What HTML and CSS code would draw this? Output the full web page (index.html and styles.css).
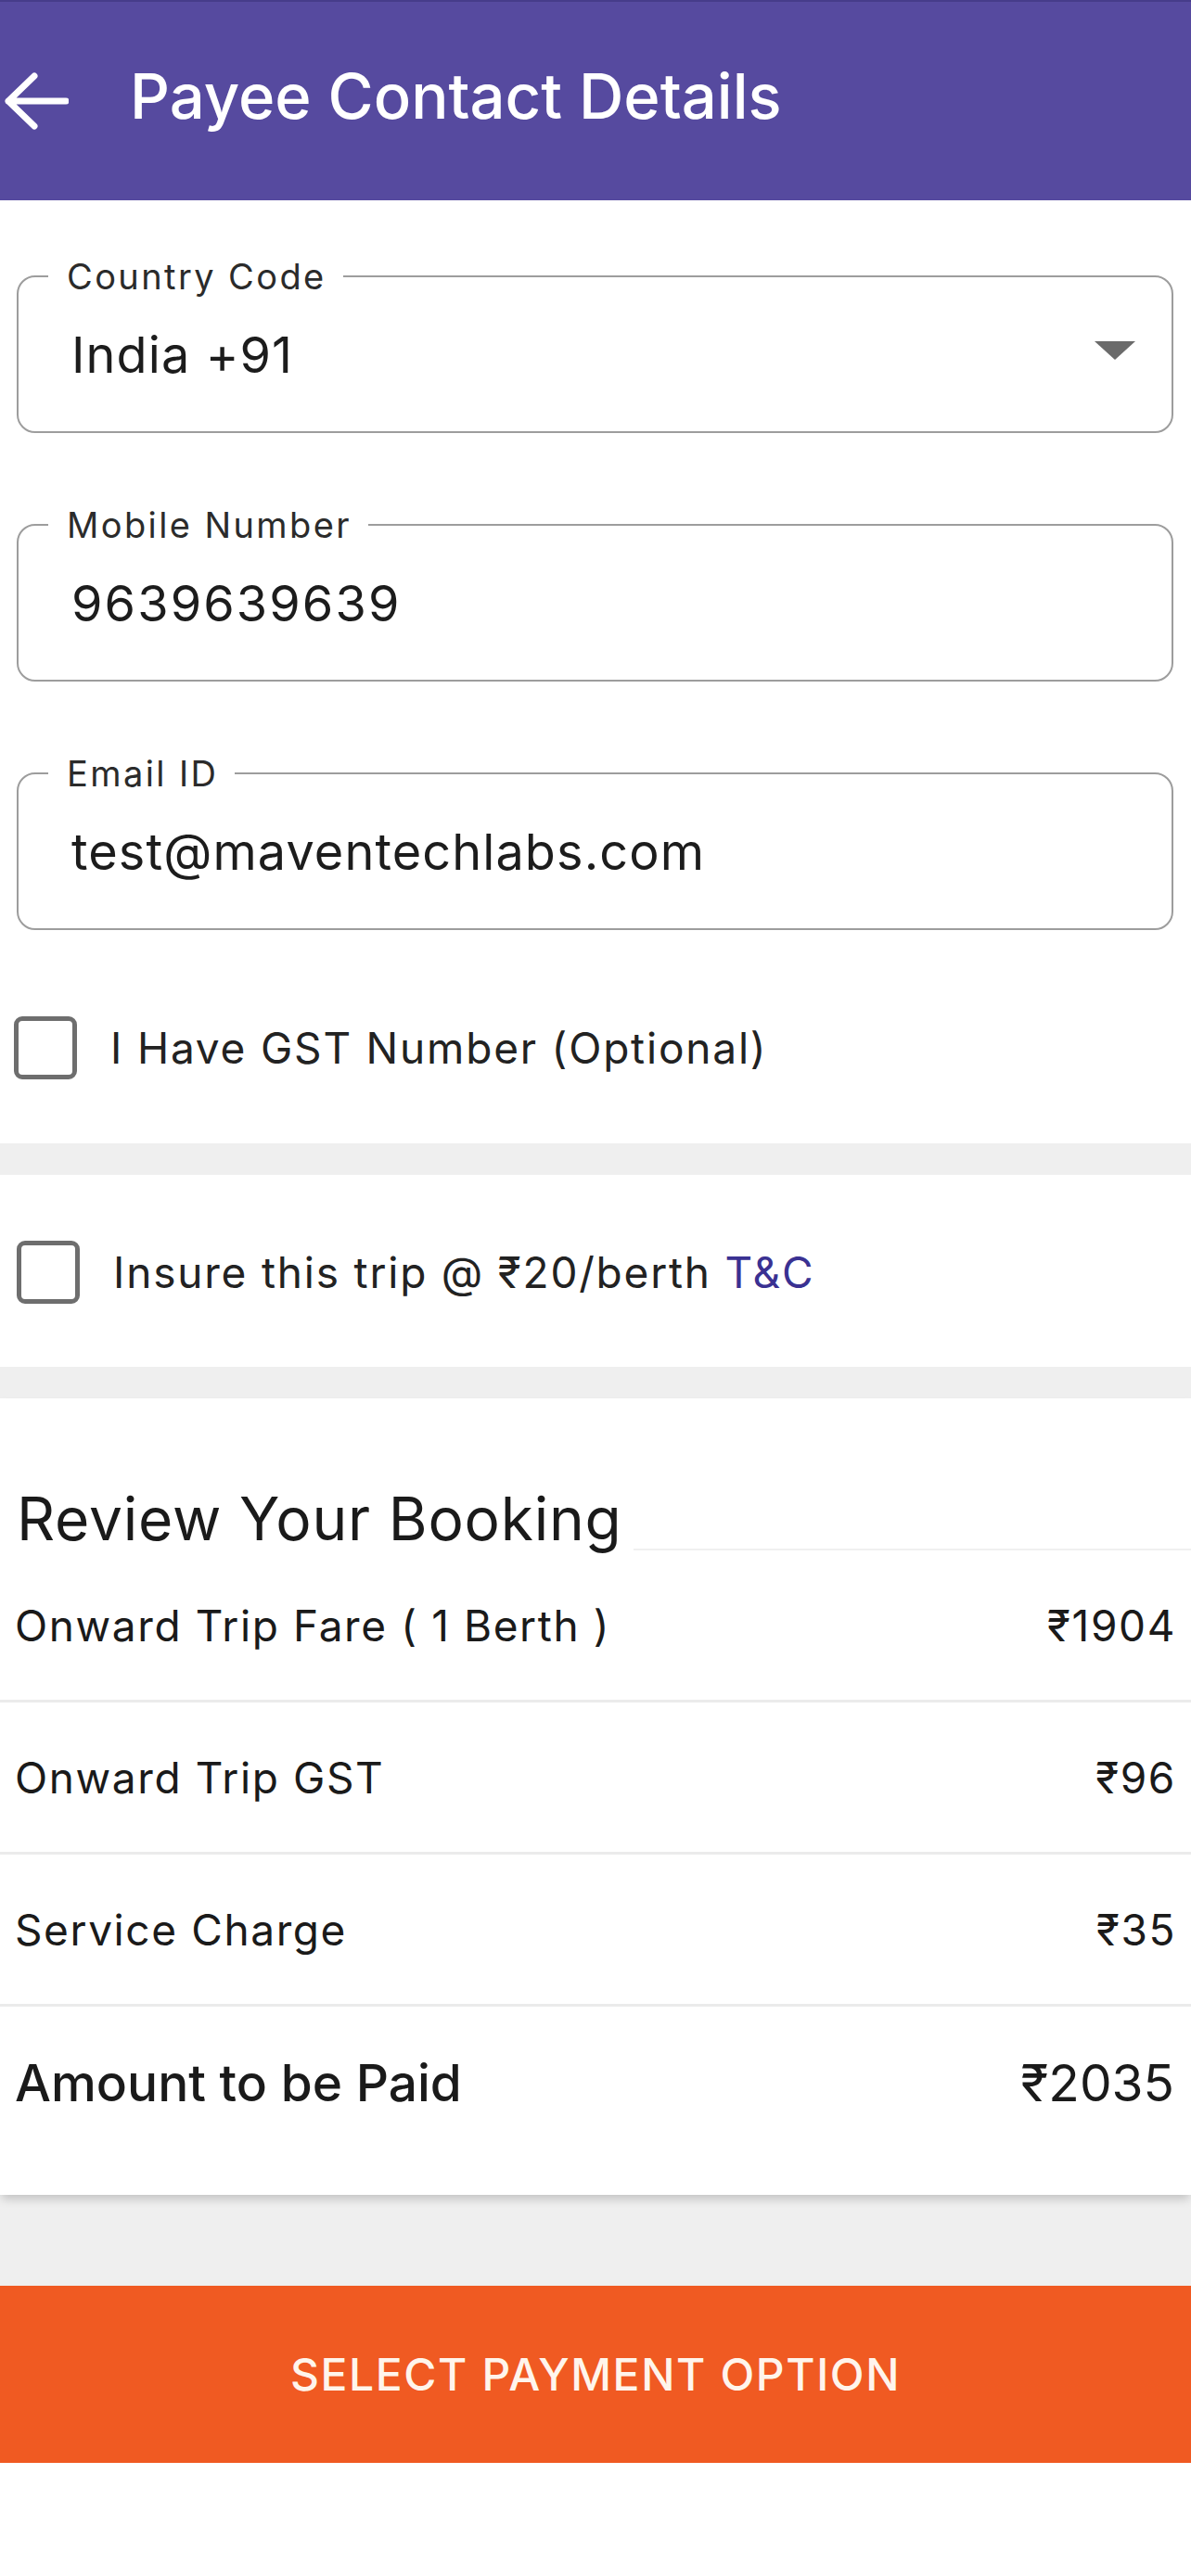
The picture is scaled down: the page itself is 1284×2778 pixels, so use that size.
FILE: index.html
```html
<!DOCTYPE html>
<html lang="en">
<head>
<meta charset="utf-8">
<title>Payee Contact Details</title>
<link rel="stylesheet" href="styles.css">
</head>
<body>
<div class="page">
  <header class="appbar">
    <svg class="back" width="70" height="62" viewBox="0 0 70 62" aria-hidden="true">
      <path d="M5 31 H67 M33 4 L5 31 L33 58" fill="none" stroke="#ffffff" stroke-width="7" stroke-linecap="round" stroke-linejoin="round"/>
    </svg>
    <h1 class="title">Payee Contact Details</h1>
  </header>

  <section class="form">
    <div class="fields">
      <fieldset class="field">
        <legend class="field-label">Country Code</legend>
        <div class="field-row">
          <span class="field-value">India +91</span>
          <svg class="caret" width="44" height="20" viewBox="0 0 44 20" aria-hidden="true">
            <polygon points="0,0 44,0 22,20" fill="#6b6b6b"/>
          </svg>
        </div>
      </fieldset>
      <fieldset class="field">
        <legend class="field-label">Mobile Number</legend>
        <div class="field-row"><span class="field-value digits">9639639639</span></div>
      </fieldset>
      <fieldset class="field">
        <legend class="field-label">Email ID</legend>
        <div class="field-row"><span class="field-value">test@maventechlabs.com</span></div>
      </fieldset>
    </div>
    <label class="check-row check-gst">
      <span class="box"></span>
      <span class="check-text">I Have GST Number (Optional)</span>
    </label>
  </section>

  <section class="insure">
    <label class="check-row">
      <span class="box"></span>
      <span class="check-text">Insure this trip @ ₹20/berth <span class="link">T&amp;C</span></span>
    </label>
  </section>

  <section class="review">
    <div class="review-head">
      <h2 class="review-title">Review Your Booking</h2>
      <div class="review-line"></div>
    </div>
    <div class="fare-row"><span>Onward Trip Fare ( 1 Berth )</span><span class="amt">₹1904</span></div>
    <div class="fare-row"><span>Onward Trip GST</span><span class="amt">₹96</span></div>
    <div class="fare-row"><span>Service Charge</span><span class="amt">₹35</span></div>
    <div class="fare-row total"><span class="total-label">Amount to be Paid</span><span class="amt">₹2035</span></div>
  </section>

  <div class="spacer"></div>
  <button class="pay-btn" type="button">SELECT PAYMENT OPTION</button>
  <div class="bottom"></div>
</div>
</body>
</html>
```

FILE: styles.css
```css
* { box-sizing: border-box; }

html, body {
  margin: 0;
  padding: 0;
  background: #ffffff;
}

body {
  font-family: Inter, "Noto Sans", "DejaVu Sans", sans-serif;
  color: #1c1c1c;
}

.page {
  width: 1284px;
  background: #efefef;
  display: flex;
  flex-direction: column;
}

/* Header */
.appbar {
  height: 216px;
  background: #564a9f;
  border-top: 2px solid #463c8a;
  display: flex;
  align-items: center;
  padding-left: 4px;
}

.back {
  flex: none;
  display: block;
}

.title {
  margin: 0 0 11px 66px;
  font-size: 67px;
  font-weight: 500;
  line-height: normal;
  color: #ffffff;
}

/* Form */
.form {
  background: #ffffff;
  padding: 59px 19px 69px 18px;
}

.fields {
  display: flex;
  flex-direction: column;
  gap: 76px;
}

.field {
  margin: 0;
  min-width: 0;
  border: 2px solid #9d9d9d;
  border-radius: 20px;
  padding: 30px 39px 50px 57px;
}

.field-label {
  margin-left: -25px;
  padding: 0 18px 0 20px;
  font-size: 38px;
  line-height: 46px;
  letter-spacing: 2.4px;
  color: #2b2b2b;
}

.field-row {
  display: flex;
  align-items: center;
  justify-content: space-between;
  height: 64px;
}

.field-value {
  font-size: 54px;
  line-height: 64px;
  letter-spacing: 1.1px;
  color: #1c1c1c;
}

.field-value.digits {
  letter-spacing: 2.1px;
}

.caret {
  display: block;
  margin-bottom: 10px;
}

/* Checkbox rows */
.check-row {
  display: flex;
  align-items: center;
  gap: 36px;
}

.check-gst {
  margin-top: 93px;
  margin-left: -3px;
}

.box {
  flex: none;
  width: 68px;
  height: 68px;
  border: 5px solid #6e6e6e;
  border-radius: 9px;
  background: #ffffff;
}

.check-text {
  font-size: 46px;
  letter-spacing: 1.8px;
  color: #222222;
}

.link {
  color: #3a3192;
}

.insure {
  background: #ffffff;
  margin-top: 34px;
  padding: 71px 18px 68px 18px;
}

/* Review */
.review {
  background: #ffffff;
  margin-top: 34px;
  padding-bottom: 39px;
  box-shadow: 0 6px 10px -2px rgba(0, 0, 0, 0.2);
  position: relative;
}

.review-head {
  height: 164px;
  display: flex;
  align-items: flex-end;
}

.review-title {
  margin: 0 0 2px 0;
  padding-left: 18px;
  font-size: 64px;
  font-weight: 400;
  line-height: 64px;
  letter-spacing: 0.8px;
  color: #1a1a1a;
  white-space: nowrap;
}

.review-line {
  flex: 1;
  margin-left: 12px;
  border-bottom: 2px solid #f0f0f0;
}

.fare-row {
  height: 164px;
  padding: 0 16px 0 16px;
  display: flex;
  align-items: center;
  justify-content: space-between;
  border-bottom: 3px solid #ebebeb;
  font-size: 46px;
  letter-spacing: 1.6px;
  color: #1a1a1a;
}

.fare-row.total {
  border-bottom: none;
  font-size: 55px;
  letter-spacing: 0;
  padding-right: 18px;
}

.total-label {
  font-weight: 500;
}

.spacer {
  height: 98px;
}

.pay-btn {
  display: flex;
  align-items: center;
  justify-content: center;
  height: 191px;
  width: 100%;
  border: none;
  margin: 0;
  padding: 0;
  background: #f05a22;
  color: #fff5ec;
  font-family: Inter, "Noto Sans", sans-serif;
  font-size: 48px;
  font-weight: 500;
  letter-spacing: 1.6px;
}

.bottom {
  height: 121px;
  background: #ffffff;
}
```
